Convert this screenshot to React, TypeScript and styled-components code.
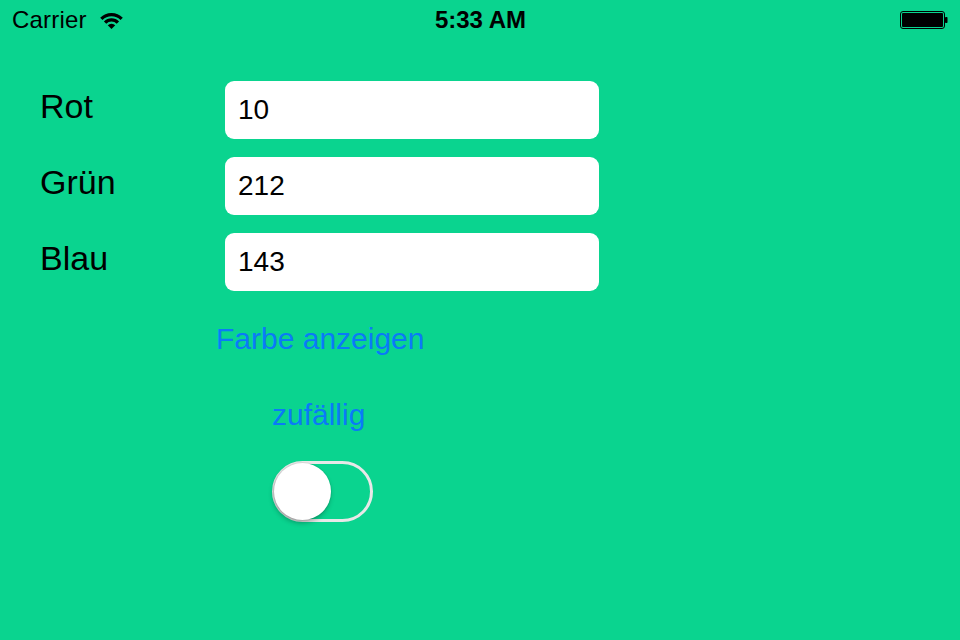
import React from "react";
import styled, { createGlobalStyle } from "styled-components";

const GlobalStyle = createGlobalStyle`
  html, body {
    margin: 0;
    padding: 0;
    background: #0ad48f;
  }
  body {
    font-family: "Liberation Sans", Arial, Helvetica, sans-serif;
    color: #000;
    width: 960px;
    height: 640px;
    overflow: hidden;
  }
  * { box-sizing: border-box; }
`;

const Screen = styled.div`
  width: 960px;
  height: 640px;
  background: #0ad48f;
  display: flex;
  flex-direction: column;
`;

const StatusBar = styled.div`
  height: 40px;
  display: grid;
  grid-template-columns: 1fr auto 1fr;
  align-items: center;
  padding: 0 11px 0 12px;
  font-size: 24px;
`;

const StatusLeft = styled.div`
  display: flex;
  align-items: center;
  gap: 13px;
`;

const Carrier = styled.span`
  line-height: 40px;
  letter-spacing: 0.2px;
`;

const Time = styled.span`
  font-weight: bold;
  line-height: 40px;
`;

const StatusRight = styled.div`
  display: flex;
  justify-content: flex-end;
  align-items: center;
`;

const Form = styled.div`
  display: flex;
  flex-direction: column;
  padding: 41px 0 0 40px;
`;

const Fields = styled.div`
  display: grid;
  grid-template-columns: 185px 374px;
  row-gap: 18px;
`;

const Label = styled.label`
  font-size: 34px;
  line-height: 40px;
  margin-top: 5px;
`;

const Field = styled.input`
  height: 58px;
  width: 374px;
  border: none;
  border-radius: 9px;
  background: #fff;
  padding: 0 0 0 13px;
  font-family: "Liberation Sans", Arial, sans-serif;
  font-size: 28px;
  color: #000;
  outline: none;
`;

const LinkButton = styled.button<{ $indent: number; $top: number }>`
  align-self: flex-start;
  background: none;
  border: none;
  padding: 0;
  margin: ${(p) => p.$top}px 0 0 ${(p) => p.$indent}px;
  font-family: "Liberation Sans", Arial, sans-serif;
  font-size: 30px;
  line-height: 36px;
  color: #0a7af8;
  cursor: pointer;
`;

const RandomLabel = styled.span`
  align-self: flex-start;
  margin: 40px 0 0 232px;
  font-size: 30px;
  line-height: 36px;
  color: #0a7af8;
`;

const SwitchTrack = styled.div`
  margin: 28px 0 0 232px;
  width: 101px;
  height: 61px;
  border-radius: 31px;
  border: 3px solid #e8e8e8;
  position: relative;
`;

const SwitchKnob = styled.div`
  position: absolute;
  left: -1px;
  top: -1px;
  width: 57px;
  height: 57px;
  border-radius: 50%;
  background: #fff;
  box-shadow: -1px 3px 5px rgba(0, 0, 0, 0.28), 0 0 0 1px rgba(0, 0, 0, 0.06);
`;

function sector(cx: number, cy: number, r1: number, r2: number) {
  const s = Math.SQRT1_2;
  const ox1 = cx - r2 * s, oy = cy - r2 * s, ox2 = cx + r2 * s;
  if (r1 <= 0) {
    return `M${cx} ${cy} L${ox1} ${oy} A${r2} ${r2} 0 0 1 ${ox2} ${oy} Z`;
  }
  const ix1 = cx - r1 * s, iy = cy - r1 * s, ix2 = cx + r1 * s;
  return `M${ix1} ${iy} L${ox1} ${oy} A${r2} ${r2} 0 0 1 ${ox2} ${oy} L${ix2} ${iy} A${r1} ${r1} 0 0 0 ${ix1} ${iy} Z`;
}

const WifiIcon = () => (
  <svg width="23" height="18" viewBox="0 0 23 18" style={{ marginTop: 1 }}>
    <path d={sector(11.5, 17, 12.7, 16)} fill="#000" />
    <path d={sector(11.5, 17, 7.4, 10.7)} fill="#000" />
    <path d={sector(11.5, 17, 0, 5.3)} fill="#000" />
  </svg>
);

const BatteryIcon = () => (
  <svg width="49" height="20" viewBox="0 0 49 20">
    <rect x="0.5" y="1.5" width="44" height="17" rx="2.5" fill="none" stroke="#000" strokeWidth="1" />
    <rect x="2" y="3" width="41" height="14" rx="1" fill="#000" />
    <rect x="45" y="7" width="2.5" height="6" rx="0.8" fill="#000" />
  </svg>
);

const rows = [
  { label: "Rot", value: "10" },
  { label: "Grün", value: "212" },
  { label: "Blau", value: "143" },
];

export default function App() {
  return (
    <>
      <GlobalStyle />
      <Screen>
        <StatusBar>
          <StatusLeft>
            <Carrier>Carrier</Carrier>
            <WifiIcon />
          </StatusLeft>
          <Time>5:33 AM</Time>
          <StatusRight>
            <BatteryIcon />
          </StatusRight>
        </StatusBar>
        <Form>
          <Fields>
            {rows.map((r) => (
              <React.Fragment key={r.label}>
                <Label>{r.label}</Label>
                <Field type="text" defaultValue={r.value} readOnly />
              </React.Fragment>
            ))}
          </Fields>
          <LinkButton $indent={176} $top={30}>Farbe anzeigen</LinkButton>
          <RandomLabel>zufällig</RandomLabel>
          <SwitchTrack>
            <SwitchKnob />
          </SwitchTrack>
        </Form>
      </Screen>
    </>
  );
}
